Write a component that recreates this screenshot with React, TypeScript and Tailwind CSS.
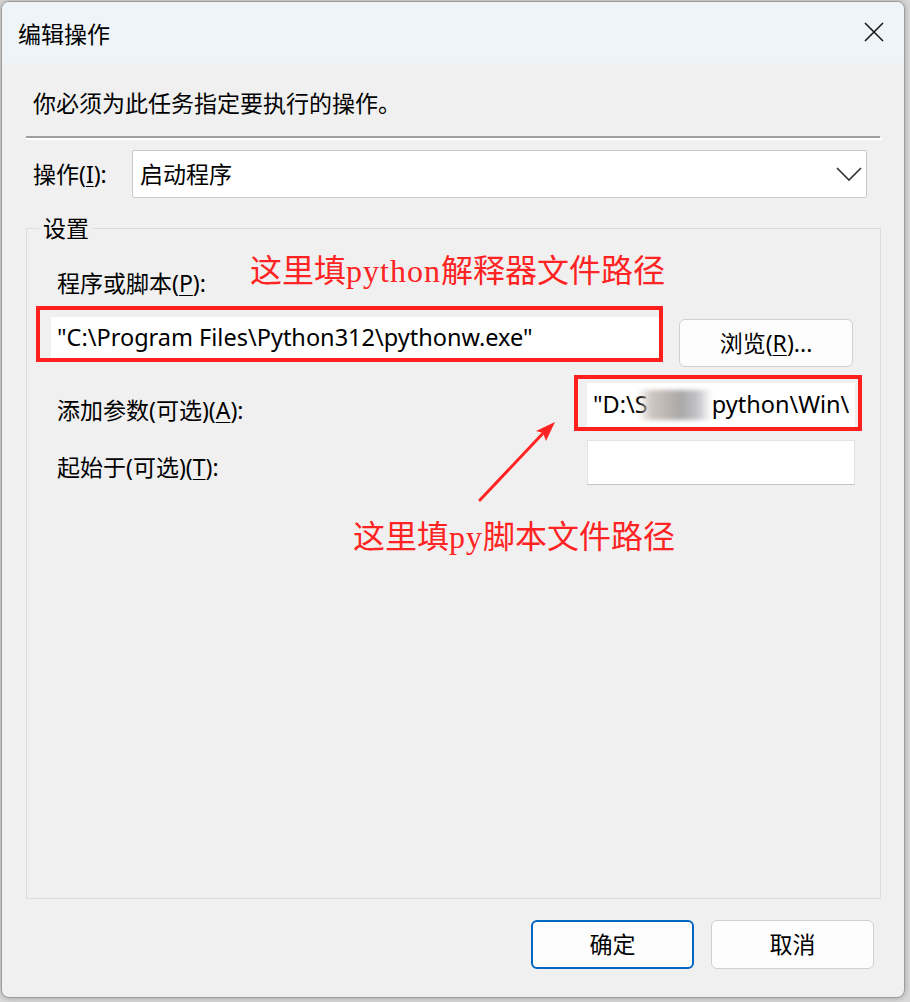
import React from "react";

function U({ children }: { children: React.ReactNode }) {
  return <span className="underline underline-offset-[3px] decoration-1">{children}</span>;
}

export default function App() {
  return (
    <div className="relative w-[910px] h-[1002px] overflow-hidden bg-[#d9d9d9] pt-[1px] pl-[1px] font-['Noto_Sans','Noto_Sans_CJK_SC',sans-serif] text-[#000]">
      <div className="w-[904px] h-[997px] rounded-[8px] border border-[#9c9c9c] bg-[#f0f0f0] overflow-hidden flex flex-col shadow-[0_0_6px_rgba(0,0,0,0.25)]">
        {/* title bar */}
        <div className="h-[61px] shrink-0 bg-[#eff4f9] flex items-center">
          <div className="pl-[16px] text-[23px] leading-[32px] pt-[2px]">编辑操作</div>
          <div className="ml-auto mr-[20px] w-[20px] h-[20px] mt-[-2px]">
            <svg width="20" height="20" viewBox="0 0 20 20">
              <path d="M1 1 L19 19 M19 1 L1 19" stroke="#1a1a1a" strokeWidth="1.6" fill="none" />
            </svg>
          </div>
        </div>

        {/* body */}
        <div className="flex-1 flex flex-col">
          <div className="mt-[24px] pl-[31px] text-[23px] leading-[32px]">你必须为此任务指定要执行的操作。</div>
          <div className="mt-[17px] ml-[24px] w-[854px] h-[2px] bg-[#a0a0a0]" />
          <div className="ml-[24px] w-[856px] h-[2px] bg-[#ffffff]" />

          <div className="mt-[10px] ml-[31px] flex items-center">
            <div className="w-[99px] text-[23px] leading-[32px]">
              操作(<U>I</U>):
            </div>
            <div className="w-[735px] h-[48px] bg-white border border-[#cacaca] rounded-[2px] flex items-center pl-[7px] pr-[4px]">
              <span className="text-[23px] leading-[32px]">启动程序</span>
              <svg className="ml-auto" width="26" height="16" viewBox="0 0 26 16">
                <path d="M1 2 L13 14 L25 2" stroke="#333" strokeWidth="1.6" fill="none" />
              </svg>
            </div>
          </div>

          <fieldset className="mt-[14px] ml-[24px] w-[855px] flex-1 border border-[#dcdcdc]">
            <legend className="ml-[12px] px-[4px] text-[23px] leading-[32px]">设置</legend>

            {/* row A */}
            <div className="mt-[11px] flex items-start">
              <div className="ml-[30px] mt-[12px] w-[193px] shrink-0 text-[23px] leading-[32px] whitespace-nowrap">
                程序或脚本(<U>P</U>):
              </div>
              <div className="text-[32px] leading-[32px] text-[#ff2323] font-['Liberation_Serif','Noto_Sans_CJK_SC',serif] whitespace-nowrap">
                这里填<span className="tracking-[1px]">python</span>解释器文件路径
              </div>
            </div>

            {/* row B */}
            <div className="mt-[7px] flex items-start">
              <div className="ml-[9px] w-[627px] h-[56px] shrink-0 border-[4px] border-[#ff1f1f] pl-[11px] pt-[7px] overflow-hidden">
                <div className="h-full bg-white pl-[6px] flex items-center text-[23.5px] whitespace-nowrap overflow-hidden">
                  "C:\Program Files\Python312\pythonw.exe"
                </div>
              </div>
              <div className="ml-[16px] mt-[13px] w-[174px] h-[48px] shrink-0 rounded-[6px] border border-[#d0d0d0] bg-[#fdfdfd] flex items-center justify-center text-[23px] leading-[32px]">
                浏览(<U>R</U>)...
              </div>
            </div>

            {/* row C */}
            <div className="mt-[8px] flex items-start">
              <div className="ml-[30px] mt-[19px] text-[23px] leading-[32px] whitespace-nowrap">
                添加参数(可选)(<U>A</U>):
              </div>
              <div className="ml-auto mr-[18px] w-[288px] h-[56px] shrink-0 border-[4px] border-[#ff1f1f] pl-[9px] pr-[3px] pt-[4px] overflow-hidden">
                <div className="h-full bg-white pl-[6px] flex items-center text-[23.5px] whitespace-nowrap overflow-hidden">
                  <span className="shrink-0">"D:\S</span>
                  <span className="shrink-0 block w-[74px] h-[30px] -ml-[10px] blur-[2px] bg-[linear-gradient(to_right,#ffffff00,#cdc6c2_18%,#bbb4b0_40%,#a9a9a9_58%,#c4c2c8_80%,#ffffff00)]" />
                  <span className="shrink-0">python\Win\</span>
                </div>
              </div>
            </div>

            {/* row D */}
            <div className="mt-[9px] flex items-start">
              <div className="ml-[30px] mt-[11px] text-[23px] leading-[32px] whitespace-nowrap">
                起始于(可选)(<U>T</U>):
              </div>
              <div className="ml-auto mr-[25px] w-[268px] h-[45px] shrink-0 bg-white border border-[#e3e3e3] border-b-[#c4c4c4]" />
            </div>

            <div className="mt-[36px] ml-[326px] text-[32px] leading-[32px] text-[#ff2323] font-['Liberation_Serif','Noto_Sans_CJK_SC',serif] whitespace-nowrap">
              这里填<span className="tracking-[1px]">py</span>脚本文件路径
            </div>
          </fieldset>

          {/* buttons */}
          <div className="mt-[21px] mb-[28px] flex justify-end gap-[17px] mr-[30px]">
            <div className="w-[163px] h-[49px] rounded-[6px] border-2 border-[#0067c0] bg-[#fdfdfd] flex items-center justify-center text-[23px]">
              确定
            </div>
            <div className="w-[163px] h-[49px] rounded-[6px] border border-[#d0d0d0] bg-[#fdfdfd] flex items-center justify-center text-[23px]">
              取消
            </div>
          </div>
        </div>
      </div>

      {/* annotation arrow */}
      <svg className="absolute left-[470px] top-[415px]" width="95" height="95" viewBox="0 0 95 95">
        <path d="M10 85 L77 14" stroke="#ff2323" strokeWidth="3" strokeLinecap="round" fill="none" />
        <polygon points="85,7 66,16 73,18 76,26" fill="#ff2323" />
      </svg>
    </div>
  );
}
